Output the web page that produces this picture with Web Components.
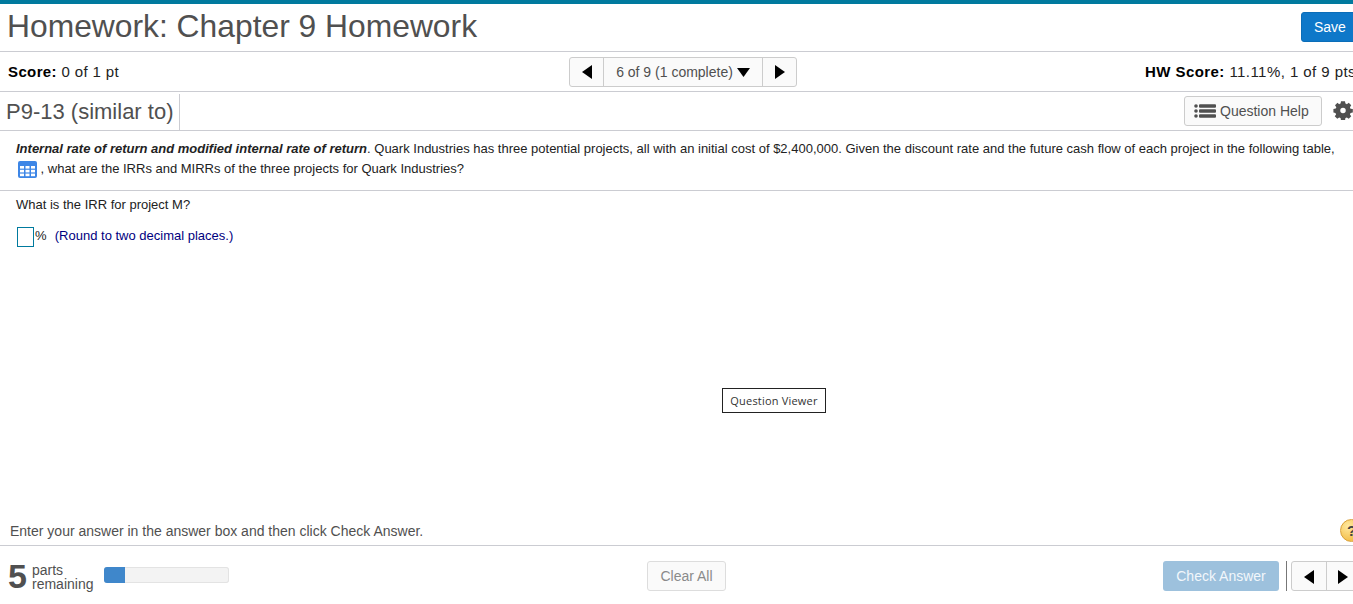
<!DOCTYPE html>
<html><head><meta charset="utf-8">
<style>
html,body{margin:0;padding:0;height:100%;overflow:hidden;background:#fff}
body{font-family:"Liberation Sans",Arial,sans-serif;font-size:13px;color:#222}
hw-app{width:1353px;height:604px}
</style></head>
<body>
<hw-app>
  <hw-title-bar slot="title"></hw-title-bar>
  <hw-score-bar></hw-score-bar>
  <hw-question-bar></hw-question-bar>
  <hw-question></hw-question>
  <hw-footer></hw-footer>
</hw-app>
<script>
function def(name, css, html){
  customElements.define(name, class extends HTMLElement{
    constructor(){super();const r=this.attachShadow({mode:'open'});r.innerHTML='<style>'+css+'</style>'+html;}
  });
}
const TRI_L='<svg width="10" height="14" viewBox="0 0 10 14" style="margin-top:1px"><path d="M10 0V14L0 7Z" fill="#000"/></svg>';
const TRI_R='<svg width="10" height="14" viewBox="0 0 10 14" style="margin-top:1px"><path d="M0 0V14L10 7Z" fill="#000"/></svg>';

def('hw-app',`:host{display:flex;flex-direction:column;overflow:hidden;position:relative;background:#fff}
  .tip{position:absolute;left:722px;top:388px;width:102px;height:23px;border:1px solid #222;display:flex;align-items:center;justify-content:center;font:11px "Open Sans",sans-serif;letter-spacing:.2px;color:#333;background:#fff}`,
  `<slot name="title"></slot><slot></slot><div class="tip">Question Viewer</div>`);

def('hw-title-bar',`:host{display:flex;flex:none;align-items:flex-start;justify-content:space-between;height:47px;border-top:4px solid #007a9e;border-bottom:1px solid #cbccd2;width:1370px}
  h1{margin:0;padding:3px 0 0 7px;font-weight:400;font-size:31.8px;line-height:38px;color:#505050}
  button{margin:8px 0 0;width:69px;height:30px;background:#0e78c9;border:1px solid #0b6db8;border-radius:3px;color:#fff;font:14px "Liberation Sans",sans-serif;text-align:left;padding:0 0 0 12px}`,
  `<h1>Homework: Chapter 9 Homework</h1><button>Save</button>`);

def('hw-nav-group',`:host{display:inline-flex;height:30px;border:1px solid #ccc;border-radius:3px;background:#fafafa;box-sizing:border-box}
  ::slotted(*){display:flex;align-items:center;justify-content:center}`,`<slot></slot>`);

def('hw-score-bar',`:host{display:grid;flex:none;grid-template-columns:1fr auto 1fr;align-items:center;height:39px;border-bottom:1px solid #cbccd2;width:1370px;box-sizing:content-box;font-size:15px;letter-spacing:.38px;color:#222}
  b{color:#000}
  .l{padding-left:8px}
  .r{justify-self:end;padding-right:14px;white-space:nowrap;letter-spacing:.44px}
  .c{display:flex;justify-content:flex-start;width:228px;margin-right:4px;letter-spacing:0}
  .p{width:33px;border-right:1px solid #ccc}
  .m{width:158px;border-right:1px solid #ccc;gap:4px;color:#505050;font-size:14px;white-space:nowrap}
  .n{width:33px}
  span{display:flex}`,
  `<div class="l"><b>Score:</b> 0 of 1 pt</div>
   <div class="c"><hw-nav-group>
     <span class="p">${TRI_L}</span>
     <span class="m">6 of 9 (1 complete)<svg width="13" height="9" viewBox="0 0 13 9" style="margin-top:2px"><path d="M0 0H13L6.5 9Z" fill="#000"/></svg></span>
     <span class="n">${TRI_R}</span>
   </hw-nav-group></div>
   <div class="r"><b>HW Score:</b> 11.11%, 1 of 9 pts</div>`);

def('hw-question-bar',`:host{display:flex;flex:none;align-items:stretch;height:38px;border-bottom:1px solid #cbccd2;color:#505050}
  .t{font-size:22px;line-height:36px;padding:0 5px 0 6px;border-right:1px solid #cbccd2;margin-top:2px;height:36px;box-sizing:border-box;width:180px}
  .s{flex:1}
  button{align-self:flex-start;flex:none;margin:4px 0 0;width:138px;height:30px;background:#fafafa;border:1px solid #ccc;border-radius:3px;display:flex;align-items:center;gap:4px;padding:0 0 0 9px;font:14px "Liberation Sans",sans-serif;color:#505050;box-sizing:border-box}
  .g{margin:8px 0 0 11px;width:20px;height:20px;flex:none}`,
  `<div class="t">P9-13 (similar to)</div><div class="s"></div>
   <button><svg width="22" height="14" viewBox="0 0 22 14" fill="#505050"><circle cx="2" cy="2" r="1.8"/><circle cx="2" cy="7" r="1.8"/><circle cx="2" cy="12" r="1.8"/><rect x="5" y=".2" width="17" height="3.6" rx="1"/><rect x="5" y="5.2" width="17" height="3.6" rx="1"/><rect x="5" y="10.2" width="17" height="3.6" rx="1"/></svg>Question Help</button>
   <svg class="g" viewBox="-1 -1 24 24"><path fill="#505050" fill-rule="evenodd" d="M8.6.5h4.8l.5 2.8c.6.2 1.2.4 1.7.7l2.3-1.6 3 3-1.6 2.3c.3.5.5 1.1.7 1.7l2.8.5v4.2l-2.8.5c-.2.6-.4 1.2-.7 1.7l1.6 2.3-3 3-2.3-1.6c-.5.3-1.1.5-1.7.7l-.5 2.8H8.6l-.5-2.8c-.6-.2-1.2-.4-1.7-.7l-2.3 1.6-3-3 1.6-2.3c-.3-.5-.5-1.1-.7-1.7L-.5 14V9.8l2.8-.5c.2-.6.4-1.2.7-1.7L1.4 5.4l3-3L6.4 4c.5-.3 1.1-.5 1.7-.7ZM11 8.2a3.3 3.3 0 1 0 0 6.6 3.3 3.3 0 0 0 0-6.6Z"/></svg>`);

def('hw-question',`:host{display:block;flex:none;height:395px;position:relative;font-size:13px;color:#222}
  .stem{padding:8px 16px 0;line-height:20px;height:60px;box-sizing:border-box;border-bottom:1px solid #cbccd2;width:1370px;white-space:nowrap}
  .ic{display:inline-block;vertical-align:-5px;margin:0 0 0 2px}
  .q{padding:7px 16px 0;line-height:14px;margin:0}
  .a{display:flex;align-items:flex-start;margin:15px 0 0 17px;color:#000080;white-space:pre;line-height:18px}
  .box{width:15px;height:18px;border:1px solid #007a9e;margin-right:1px;flex:none}
  .pc{color:#222;margin-right:1px}`,
  `<div class="stem"><b><i>Internal rate of return and modified internal rate of return</i></b>. Quark Industries has three potential projects, all with an initial cost of $2,400,000. Given the discount rate and the future cash flow of each project in the following table,<br><svg class="ic" width="19" height="17" viewBox="0 0 19 17"><rect width="19" height="17" rx="2" fill="#3d86e6"/><g fill="#fff"><rect x="2" y="5" width="4" height="2.6"/><rect x="7.5" y="5" width="4" height="2.6"/><rect x="13" y="5" width="4" height="2.6"/><rect x="2" y="8.8" width="4" height="2.6"/><rect x="7.5" y="8.8" width="4" height="2.6"/><rect x="13" y="8.8" width="4" height="2.6"/><rect x="2" y="12.6" width="4" height="2.6"/><rect x="7.5" y="12.6" width="4" height="2.6"/><rect x="13" y="12.6" width="4" height="2.6"/></g></svg> , what are the IRRs and MIRRs of the three projects for Quark Industries?</div>
   <p class="q">What is the IRR for project M?</p>
   <div class="a"><span class="box"></span><span class="pc">%</span>  (Round to two decimal places.)</div>`);

def('hw-footer',`:host{display:block;flex:none;position:relative;color:#505050}
  .ins{display:flex;justify-content:space-between;height:45px;margin-top:-25px;box-sizing:border-box;border-bottom:1px solid #cbccd2;font-size:14px;padding:0 0 6px 10px;align-items:flex-end;overflow:hidden}
  .help{width:23px;height:23px;border-radius:50%;background:radial-gradient(circle at 35% 30%,#ffe9a0,#efb02c);border:1px solid #d9a03a;color:#444;font:bold 15px/21px "Liberation Sans",sans-serif;text-align:center;box-sizing:border-box;flex:none;margin:0 -10px -3px 0}
  .bar{display:flex;align-items:center;height:58px;width:1353px;box-sizing:border-box;padding-top:2px}
  .bar>*{flex:none}
  .five{font:bold 34px/34px "Liberation Sans",sans-serif;color:#505050;margin-left:8px;width:24px}
  .rem{font-size:14px;line-height:14px;width:72px;padding-top:1px}
  .pb{width:125px;height:16px;border:0;background:#f3f3f3;box-shadow:inset 0 0 0 1px #e3e3e3;border-radius:3px;overflow:hidden;margin-top:-2px}
  .pb i{display:block;width:21px;height:100%;background:#3f87cb}
  .clear{margin-left:418px;width:79px;height:30px;background:#fafafa;border:1px solid #ddd;border-radius:3px;color:#8a8a8a;font:14px "Liberation Sans",sans-serif;padding:0}
  .check{margin-left:437px;width:116px;height:30px;background:#9dc1dd;border:0;border-radius:3px;color:#f2f7fb;font:14px "Liberation Sans",sans-serif;padding:0}
  .sep{width:1px;height:30px;background:#777;margin:0 4px 0 7px}
  hw-nav-group{width:70px}
  hw-nav-group span{width:34px}
  hw-nav-group span:first-child{border-right:1px solid #ccc}`,
  `<div class="ins"><span>Enter your answer in the answer box and then click Check Answer.</span><span class="help">?</span></div>
   <div class="bar"><span class="five">5</span><span class="rem">parts<br>remaining</span><div class="pb"><i></i></div>
   <button class="clear">Clear All</button><button class="check">Check Answer</button><span class="sep"></span>
   <hw-nav-group><span>${TRI_L}</span><span>${TRI_R}</span></hw-nav-group></div>`);
</script>
</body></html>
